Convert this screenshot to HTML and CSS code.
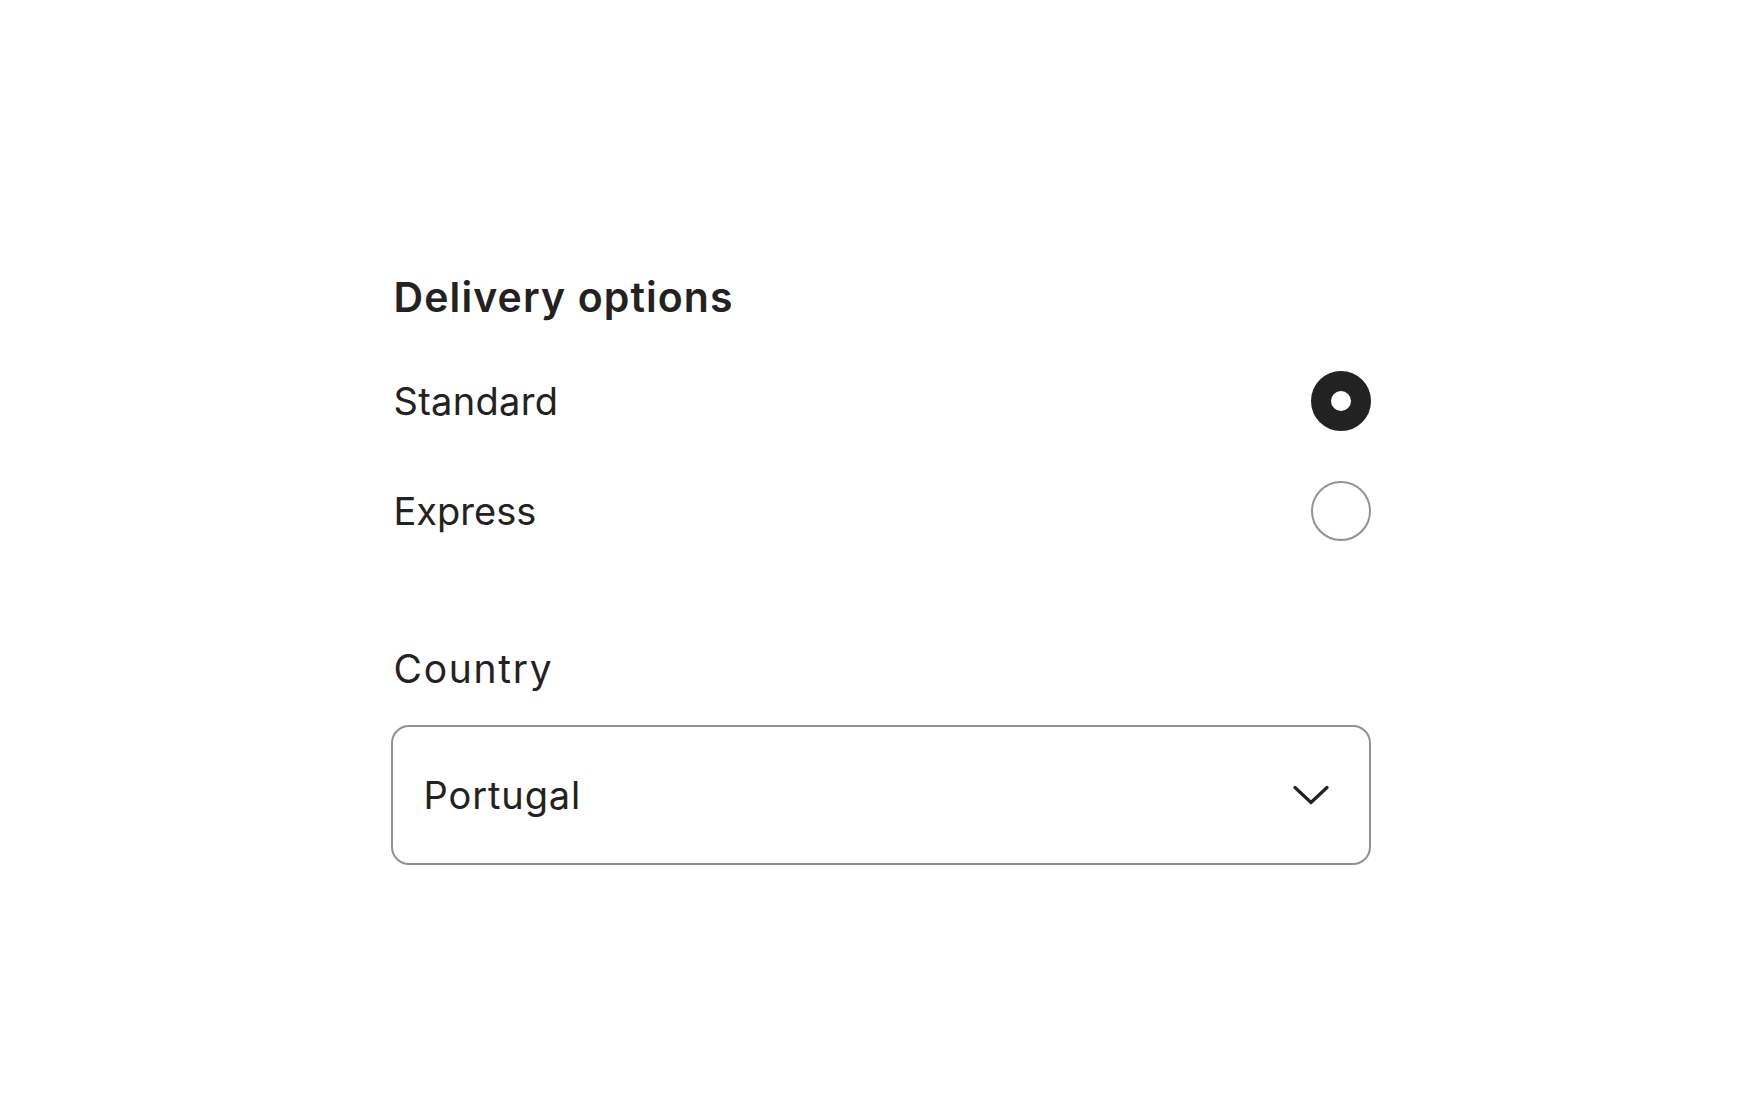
FILE: index.html
```html
<!DOCTYPE html>
<html lang="en">
<head>
    <meta charset="UTF-8">
    <meta name="viewport" content="width=device-width, initial-scale=1.0">
    <title>Delivery options</title>
    <link rel="stylesheet" href="styles.css">
</head>
<body>
    <div class="container">
        <h1>Delivery options</h1>

        <div class="options">
            <label class="option">
                <span class="option-standard">Standard</span>
                <input type="radio" name="delivery" value="standard" checked>
            </label>
            <label class="option">
                <span>Express</span>
                <input type="radio" name="delivery" value="express">
            </label>
        </div>

        <div class="field">
            <div class="field-label">Country</div>
            <div class="select">
                <span class="select-value">Portugal</span>
                <svg class="chevron" width="36" height="20" viewBox="0 0 36 20" fill="none">
                    <path d="M2 2.5 L18 17.5 L34 2.5" stroke="#222" stroke-width="3.2" stroke-linecap="round" stroke-linejoin="round"/>
                </svg>
            </div>
        </div>
    </div>
</body>
</html>
```

FILE: styles.css
```css
:root {
    --text: #222222;
    --border: #929292;
    --background: #ffffff;
}

body {
    font-family: 'Inter', 'Noto Sans', sans-serif;
    background: var(--background);
    color: var(--text);
    margin: 0;
}

.container {
    width: 980px;
    margin: 0 auto;
    padding-top: 272px;
}

h1 {
    font-size: 41px;
    line-height: 50px;
    font-weight: 600;
    letter-spacing: 1.1px;
    margin: 0 0 49px 3px;
}

.options {
    display: flex;
    flex-direction: column;
    gap: 50px;
}

.option {
    display: flex;
    align-items: center;
    justify-content: space-between;
    height: 60px;
    font-size: 38px;
    line-height: 60px;
    padding-left: 3px;
    cursor: pointer;
}

.option-standard {
    letter-spacing: 0.3px;
}

.option input {
    appearance: none;
    -webkit-appearance: none;
    margin: 0;
    width: 60px;
    height: 60px;
    border-radius: 50%;
    border: 2px solid var(--border);
    background: #fff;
    box-sizing: border-box;
}

.option input:checked {
    border: 20px solid var(--text);
}

.field {
    margin-top: 105px;
}

.field-label {
    font-size: 39px;
    line-height: 46px;
    letter-spacing: 1.7px;
    margin: 0 0 33px 3px;
}

.select {
    display: flex;
    align-items: center;
    justify-content: space-between;
    height: 140px;
    box-sizing: border-box;
    border: 2px solid var(--border);
    border-radius: 18px;
    padding: 0 40px 0 31px;
    font-size: 38px;
    line-height: 46px;
}

.select-value {
    letter-spacing: 0.9px;
}

.chevron {
    display: block;
}
```
